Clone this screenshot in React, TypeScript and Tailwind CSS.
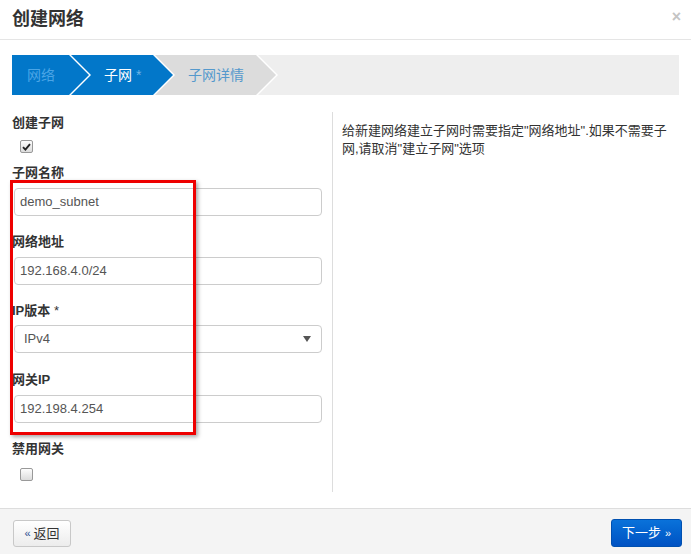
import React from "react";

const font = {
  fontFamily:
    '"Liberation Sans", Arial, "Noto Sans CJK SC", sans-serif',
};

const chevron =
  "[clip-path:polygon(0_0,calc(100%-20px)_0,100%_50%,calc(100%-20px)_100%,0_100%)]";

function Label({ children }: { children: React.ReactNode }) {
  return (
    <div className="h-[18px] text-[13px] leading-[18px] font-bold text-[#333]">
      {children}
    </div>
  );
}

function TextInput({ value }: { value: string }) {
  return (
    <div className="h-[28px] w-full rounded-[4px] border border-[#ccc] bg-white px-[5px] text-[13px] leading-[26px] text-[#555]">
      {value}
    </div>
  );
}

function Checkbox({ checked }: { checked?: boolean }) {
  return (
    <div className="ml-[8px] flex h-[13px] w-[13px] items-center justify-center rounded-[2px] border border-[#999] bg-gradient-to-b from-[#fdfdfd] to-[#dcdcdc]">
      {checked && (
        <svg width="9" height="8" viewBox="0 0 9 8">
          <path d="M1 4.2 L3.4 6.6 L8 1.2" stroke="#222" strokeWidth="1.9" fill="none" />
        </svg>
      )}
    </div>
  );
}

export default function App() {
  return (
    <div className="relative flex h-[554px] w-[691px] flex-col overflow-hidden bg-white" style={font}>
      {/* Header */}
      <div className="flex h-[40px] shrink-0 items-center justify-between border-b border-[#e5e5e5] px-[12px]">
        <h1 className="text-[18px] font-bold text-[#333]">创建网络</h1>
        <span className="mr-[-2px] mt-[-6px] text-[16px] font-bold text-[#c4c4c4]">×</span>
      </div>

      {/* Wizard */}
      <div className="mx-[12px] mt-[15px] flex h-[40px] shrink-0 bg-[#eeeeee] text-[14px] leading-[40px]">
        <div className={`relative z-30 w-[79px] bg-white ${chevron}`}>
          <div className={`h-full w-[77px] bg-[#0277c9] pl-[15px] text-[#4aa5e6] ${chevron}`}>网络</div>
        </div>
        <div className={`relative z-20 ml-[-22px] w-[106px] bg-white ${chevron}`}>
          <div className={`h-full w-[104px] bg-[#0277c9] pl-[35px] text-white ${chevron}`}>
            子网 <span className="text-[#6fb4e6]">*</span>
          </div>
        </div>
        <div className={`relative z-10 ml-[-22px] w-[125px] bg-white ${chevron}`}>
          <div className={`h-full w-[123px] bg-[#dcdcdc] pl-[35px] text-[#5599cc] ${chevron}`}>子网详情</div>
        </div>
      </div>

      {/* Body */}
      <div className="mt-[17px] flex px-[12px]">
        <div className="w-[310px] pt-[2px]">
          <Label>创建子网</Label>
          <div className="mt-[8px]">
            <Checkbox checked />
          </div>
          <div className="mt-[11px]">
            <Label>子网名称</Label>
          </div>
          <div className="mt-[6px] pl-[2px]">
            <TextInput value="demo_subnet" />
          </div>
          <div className="mt-[17px]">
            <Label>网络地址</Label>
          </div>
          <div className="mt-[6px] pl-[2px]">
            <TextInput value="192.168.4.0/24" />
          </div>
          <div className="mt-[17px]">
            <Label>
              IP版本 <span className="font-normal">*</span>
            </Label>
          </div>
          <div className="mt-[5px] pl-[2px]">
            <div className="flex h-[28px] w-full items-center justify-between rounded-[4px] border border-[#ccc] bg-white pl-[9px] pr-[10px] text-[13px] text-[#555]">
              <span>IPv4</span>
              <svg width="8" height="6" viewBox="0 0 8 6">
                <path d="M0 0 H8 L4 6 Z" fill="#555" />
              </svg>
            </div>
          </div>
          <div className="mt-[18px]">
            <Label>网关IP</Label>
          </div>
          <div className="mt-[6px] pl-[2px]">
            <TextInput value="192.198.4.254" />
          </div>
          <div className="mt-[17px]">
            <Label>禁用网关</Label>
          </div>
          <div className="mt-[10px]">
            <Checkbox />
          </div>
        </div>
        <div className="ml-[10px] h-[380px] w-px bg-[#dddddd]" />
        <div className="pl-[9px] pt-[10px] text-[13px] leading-[18px] text-[#333]">
          <p className="w-[335px]">
            给新建网络建立子网时需要指定"网络地址".如果不需要子网,请取消"建立子网"选项
          </p>
        </div>
      </div>

      {/* Footer */}
      <div className="mt-auto flex h-[46px] shrink-0 items-center justify-between border-t border-[#dddddd] bg-[#f4f4f4] pl-[13px] pr-[9px]">
        <div className="mt-[4px] flex h-[27px] w-[58px] items-center justify-center rounded-[3px] border border-[#c8c8c8] bg-gradient-to-b from-white to-[#ececec] text-[13px] text-[#333]">
          <span className="mr-[3px] text-[11px] text-[#2a4d8f]">«</span>返回
        </div>
        <div className="mt-[3px] flex h-[28px] w-[71px] items-center justify-center rounded-[3px] border border-[#0050b0] bg-gradient-to-b from-[#0a72da] to-[#0152c3] text-[13px] text-white">
          下一步<span className="ml-[4px] text-[11px]">»</span>
        </div>
      </div>

      {/* Annotation */}
      <div className="pointer-events-none absolute left-[10px] top-[180px] h-[255px] w-[186px] border-[3px] border-[#ee0000] shadow-[2px_2px_4px_rgba(0,0,0,0.35)]" />
    </div>
  );
}
